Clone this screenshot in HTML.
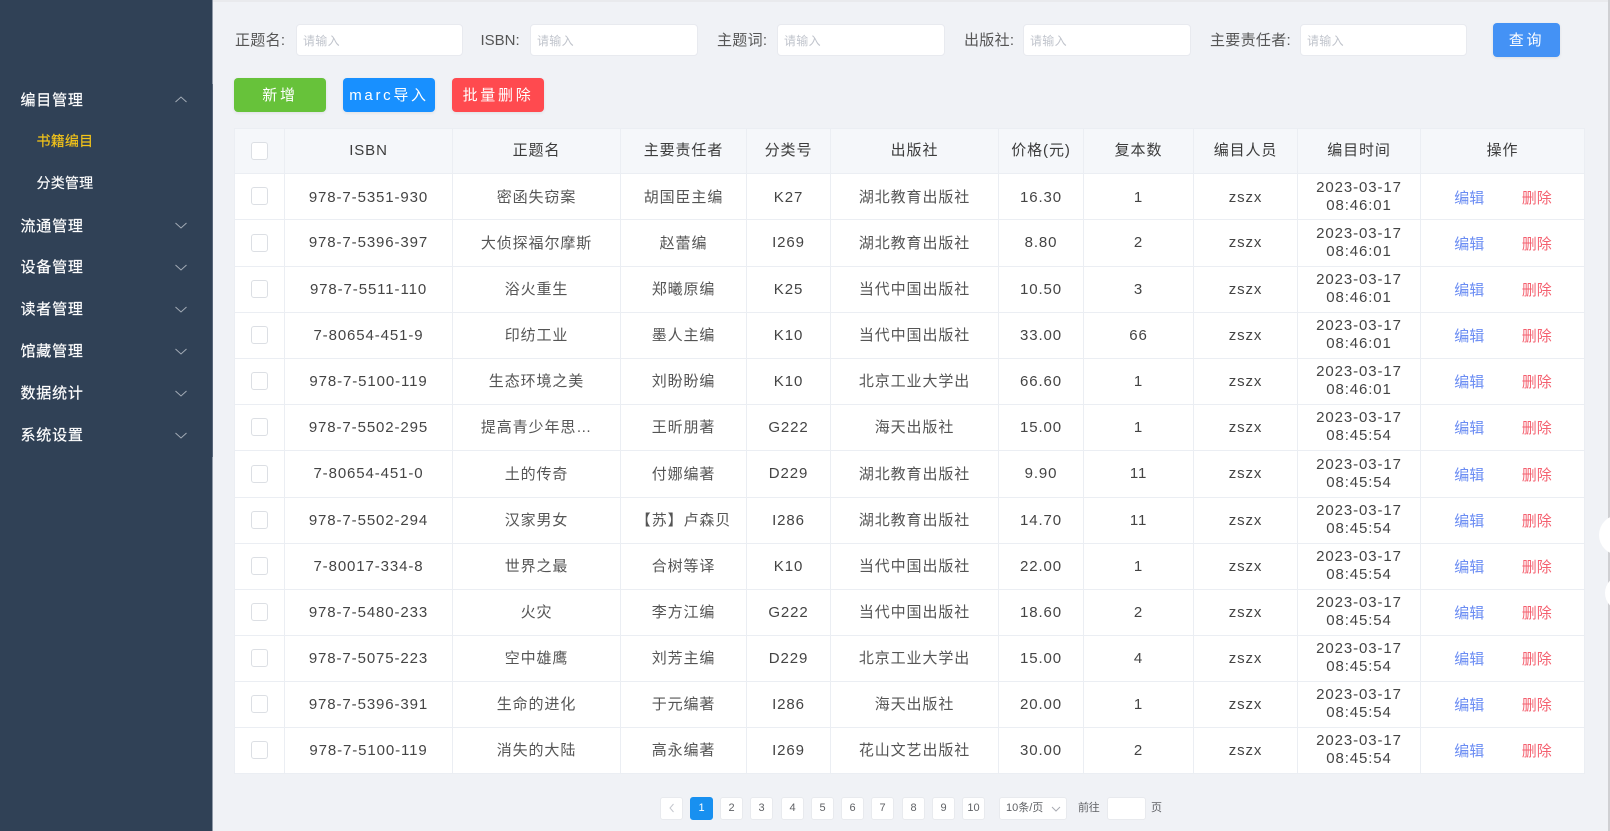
<!DOCTYPE html>
<html lang="zh-CN">
<head>
<meta charset="utf-8">
<title>书籍编目</title>
<style>
*{box-sizing:border-box;margin:0;padding:0}
html,body{width:1610px;height:831px;overflow:hidden}
body{position:relative;background:#f0f2f6;font-family:"Liberation Sans","Noto Sans CJK SC",sans-serif;font-size:15px;color:#555}
.abs{position:absolute;white-space:nowrap}
#side{position:absolute;left:0;top:0;width:212px;height:831px;background:#304156}
#edge{position:absolute;left:212px;top:0;width:1px;height:831px;background:#8f99a7}
#notch{position:absolute;left:212px;top:84px;width:1px;height:373px;background:#58667a}
#topline{position:absolute;left:212px;top:0;width:1398px;height:2px;background:#e9eaed}
#rightline{position:absolute;left:1608px;top:0;width:2px;height:831px;background:#cfd0d3}
.mi{position:absolute;left:20.500px;height:20px;line-height:20px;font-size:15px;letter-spacing:.8px;color:#fff;white-space:nowrap;-webkit-text-stroke:.2px #fff}
.si{position:absolute;left:36.500px;height:20px;line-height:20px;font-size:14px;letter-spacing:.2px;color:#fff;white-space:nowrap;-webkit-text-stroke:.15px currentColor}
.ar{position:absolute;left:175px;width:12px;height:7px}
.lb{position:absolute;top:31px;height:20px;line-height:20px;letter-spacing:.3px;color:#555;white-space:nowrap}
.ip{position:absolute;top:24px;height:32px;background:#fff;border:1px solid #e8eaef;border-radius:4px;font-size:12px;line-height:32px;padding-left:6px;color:#c0c4cc;letter-spacing:.3px}
.btn{position:absolute;top:78px;height:34px;line-height:36px;text-align:center;color:#fff;border-radius:4px;letter-spacing:2.700px;box-shadow:0 1px 3px rgba(0,0,0,.08);white-space:nowrap}
#tb{position:absolute;left:234px;top:128px;width:1350px;border-collapse:collapse;table-layout:fixed;background:#fff;letter-spacing:.9px;color:#555}
#tb th,#tb td{border:1px solid #ebeef3;text-align:center;padding:1px 0 0;vertical-align:middle;overflow:hidden;white-space:nowrap;line-height:18px}
#tb th{background:#f5f7fa;font-weight:normal;color:#3c3c3c;height:45px;padding:0 0 1px}
#tb td{height:46px}
#tb td.c{color:#444;padding:0}
#tb td.d{color:#444;line-height:17.600px;padding:0 0 1px}
#tb td.k{padding:0 0 1px}
.cb{display:inline-block;width:17px;height:18px;border:1.500px solid #dcdfe4;border-radius:3px;background:#fff;vertical-align:middle}
#tb td.a{letter-spacing:0;padding:3px 0 0 1px}
.e{color:#6a8cf3}
.x{color:#f4606f;margin-left:37.500px}
.pg{position:absolute;top:797px;width:23px;height:23px;background:#fff;border:1px solid #e8eaee;border-radius:3px;text-align:center;line-height:21px;font-size:11px;color:#606266}
.pg.on{background:#1890f0;border-color:#1890f0;color:#fff}
.circ{position:absolute;border-radius:50%;background:#fff}
</style>
</head>
<body>
<div id="topline"></div>
<div id="rightline"></div>
<div id="side"></div>
<div id="edge"></div>
<div id="notch"></div>

<div class="mi" style="top:91px">编目管理</div>
<svg class="ar" style="top:96px" viewBox="0 0 12 7"><path d="M.5 6 6 1l5.500 5" fill="none" stroke="#a3abb6" stroke-width="1"/></svg>
<div class="si" style="top:131px;color:#f5c518">书籍编目</div>
<div class="si" style="top:173px">分类管理</div>
<div class="mi" style="top:217px">流通管理</div>
<svg class="ar" style="top:222px" viewBox="0 0 12 7"><path d="M.5 1 6 6l5.500-5" fill="none" stroke="#a3abb6" stroke-width="1"/></svg>
<div class="mi" style="top:258px">设备管理</div>
<svg class="ar" style="top:264px" viewBox="0 0 12 7"><path d="M.5 1 6 6l5.500-5" fill="none" stroke="#a3abb6" stroke-width="1"/></svg>
<div class="mi" style="top:300px">读者管理</div>
<svg class="ar" style="top:306px" viewBox="0 0 12 7"><path d="M.5 1 6 6l5.500-5" fill="none" stroke="#a3abb6" stroke-width="1"/></svg>
<div class="mi" style="top:342px">馆藏管理</div>
<svg class="ar" style="top:348px" viewBox="0 0 12 7"><path d="M.5 1 6 6l5.500-5" fill="none" stroke="#a3abb6" stroke-width="1"/></svg>
<div class="mi" style="top:384px">数据统计</div>
<svg class="ar" style="top:390px" viewBox="0 0 12 7"><path d="M.5 1 6 6l5.500-5" fill="none" stroke="#a3abb6" stroke-width="1"/></svg>
<div class="mi" style="top:426px">系统设置</div>
<svg class="ar" style="top:432px" viewBox="0 0 12 7"><path d="M.5 1 6 6l5.500-5" fill="none" stroke="#a3abb6" stroke-width="1"/></svg>

<div class="lb" style="left:235px">正题名:</div>
<div class="ip" style="left:296px;width:167px">请输入</div>
<div class="lb" style="left:480.500px;letter-spacing:0">ISBN:</div>
<div class="ip" style="left:530px;width:168px">请输入</div>
<div class="lb" style="left:717px">主题词:</div>
<div class="ip" style="left:777px;width:168px">请输入</div>
<div class="lb" style="left:964px">出版社:</div>
<div class="ip" style="left:1023px;width:168px">请输入</div>
<div class="lb" style="left:1210px">主要责任者:</div>
<div class="ip" style="left:1300px;width:167px">请输入</div>
<div class="btn" style="left:1493px;top:23px;width:67px;background:#4492f5">查询</div>

<div class="btn" style="left:234px;width:92px;background:#67c23a">新增</div>
<div class="btn" style="left:343px;width:92px;background:#1890ff">marc导入</div>
<div class="btn" style="left:452px;width:92px;background:#ff4a4f">批量删除</div>

<table id="tb">
<colgroup><col style="width:50px"><col style="width:168px"><col style="width:168px"><col style="width:126px"><col style="width:84px"><col style="width:168px"><col style="width:85px"><col style="width:110px"><col style="width:104px"><col style="width:123px"><col style="width:164px"></colgroup>
<tr><th><span class="cb"></span></th><th>ISBN</th><th>正题名</th><th>主要责任者</th><th>分类号</th><th>出版社</th><th>价格(元)</th><th>复本数</th><th>编目人员</th><th>编目时间</th><th>操作</th></tr>
<tr><td class="k" style="height:45px"><span class="cb"></span></td><td class="c" style="padding-top:2px">978-7-5351-930</td><td style="padding-top:3px">密函失窃案</td><td style="padding-top:3px">胡国臣主编</td><td class="c" style="padding-top:2px">K27</td><td style="padding-top:3px">湖北教育出版社</td><td class="c" style="padding-top:2px">16.30</td><td class="c" style="padding-top:2px">1</td><td class="c" style="padding-top:2px">zszx</td><td class="d" style="padding-bottom:0">2023-03-17<br>08:46:01</td><td class="a" style="padding-top:5px"><span class="e">编辑</span><span class="x">删除</span></td></tr>
<tr><td class="k" style="height:47px"><span class="cb"></span></td><td class="c">978-7-5396-397</td><td>大侦探福尔摩斯</td><td>赵蕾编</td><td class="c">I269</td><td>湖北教育出版社</td><td class="c">8.80</td><td class="c">2</td><td class="c">zszx</td><td class="d">2023-03-17<br>08:46:01</td><td class="a"><span class="e">编辑</span><span class="x">删除</span></td></tr>
<tr><td class="k"><span class="cb"></span></td><td class="c">978-7-5511-110</td><td>浴火重生</td><td>郑曦原编</td><td class="c">K25</td><td>当代中国出版社</td><td class="c">10.50</td><td class="c">3</td><td class="c">zszx</td><td class="d">2023-03-17<br>08:46:01</td><td class="a"><span class="e">编辑</span><span class="x">删除</span></td></tr>
<tr><td class="k"><span class="cb"></span></td><td class="c">7-80654-451-9</td><td>印纺工业</td><td>墨人主编</td><td class="c">K10</td><td>当代中国出版社</td><td class="c">33.00</td><td class="c">66</td><td class="c">zszx</td><td class="d">2023-03-17<br>08:46:01</td><td class="a"><span class="e">编辑</span><span class="x">删除</span></td></tr>
<tr><td class="k"><span class="cb"></span></td><td class="c">978-7-5100-119</td><td>生态环境之美</td><td>刘盼盼编</td><td class="c">K10</td><td>北京工业大学出</td><td class="c">66.60</td><td class="c">1</td><td class="c">zszx</td><td class="d">2023-03-17<br>08:46:01</td><td class="a"><span class="e">编辑</span><span class="x">删除</span></td></tr>
<tr><td class="k"><span class="cb"></span></td><td class="c">978-7-5502-295</td><td>提高青少年思…</td><td>王昕朋著</td><td class="c">G222</td><td>海天出版社</td><td class="c">15.00</td><td class="c">1</td><td class="c">zszx</td><td class="d">2023-03-17<br>08:45:54</td><td class="a"><span class="e">编辑</span><span class="x">删除</span></td></tr>
<tr><td class="k" style="height:47px"><span class="cb"></span></td><td class="c">7-80654-451-0</td><td>土的传奇</td><td>付娜编著</td><td class="c">D229</td><td>湖北教育出版社</td><td class="c">9.90</td><td class="c">11</td><td class="c">zszx</td><td class="d">2023-03-17<br>08:45:54</td><td class="a"><span class="e">编辑</span><span class="x">删除</span></td></tr>
<tr><td class="k"><span class="cb"></span></td><td class="c">978-7-5502-294</td><td>汉家男女</td><td>【苏】卢森贝</td><td class="c">I286</td><td>湖北教育出版社</td><td class="c">14.70</td><td class="c">11</td><td class="c">zszx</td><td class="d">2023-03-17<br>08:45:54</td><td class="a"><span class="e">编辑</span><span class="x">删除</span></td></tr>
<tr><td class="k"><span class="cb"></span></td><td class="c">7-80017-334-8</td><td>世界之最</td><td>合树等译</td><td class="c">K10</td><td>当代中国出版社</td><td class="c">22.00</td><td class="c">1</td><td class="c">zszx</td><td class="d">2023-03-17<br>08:45:54</td><td class="a"><span class="e">编辑</span><span class="x">删除</span></td></tr>
<tr><td class="k"><span class="cb"></span></td><td class="c">978-7-5480-233</td><td>火灾</td><td>李方江编</td><td class="c">G222</td><td>当代中国出版社</td><td class="c">18.60</td><td class="c">2</td><td class="c">zszx</td><td class="d">2023-03-17<br>08:45:54</td><td class="a"><span class="e">编辑</span><span class="x">删除</span></td></tr>
<tr><td class="k"><span class="cb"></span></td><td class="c">978-7-5075-223</td><td>空中雄鹰</td><td>刘芳主编</td><td class="c">D229</td><td>北京工业大学出</td><td class="c">15.00</td><td class="c">4</td><td class="c">zszx</td><td class="d">2023-03-17<br>08:45:54</td><td class="a"><span class="e">编辑</span><span class="x">删除</span></td></tr>
<tr><td class="k"><span class="cb"></span></td><td class="c">978-7-5396-391</td><td>生命的进化</td><td>于元编著</td><td class="c">I286</td><td>海天出版社</td><td class="c">20.00</td><td class="c">1</td><td class="c">zszx</td><td class="d">2023-03-17<br>08:45:54</td><td class="a"><span class="e">编辑</span><span class="x">删除</span></td></tr>
<tr><td class="k" style="height:45px"><span class="cb"></span></td><td class="c">978-7-5100-119</td><td>消失的大陆</td><td>高永编著</td><td class="c">I269</td><td>花山文艺出版社</td><td class="c">30.00</td><td class="c">2</td><td class="c">zszx</td><td class="d">2023-03-17<br>08:45:54</td><td class="a"><span class="e">编辑</span><span class="x">删除</span></td></tr>
</table>

<div class="circ" style="left:1599px;top:515px;width:40px;height:40px"></div>
<div class="circ" style="left:1605px;top:575px;width:36px;height:36px"></div>

<div class="pg" style="left:660px"><svg width="8" height="10" viewBox="0 0 8 10" style="margin-top:5px"><path d="M5.500 1 2 5l3.500 4" fill="none" stroke="#c4c7cd" stroke-width="1"/></svg></div>
<div class="pg on" style="left:690px">1</div>
<div class="pg" style="left:720px">2</div>
<div class="pg" style="left:750px">3</div>
<div class="pg" style="left:781px">4</div>
<div class="pg" style="left:811px">5</div>
<div class="pg" style="left:841px">6</div>
<div class="pg" style="left:871px">7</div>
<div class="pg" style="left:902px">8</div>
<div class="pg" style="left:932px">9</div>
<div class="pg" style="left:962px">10</div>
<div class="pg" style="left:999px;width:68px;text-align:left;padding-left:6px;font-size:11px">10条/页<svg width="10" height="6" viewBox="0 0 10 6" style="position:absolute;left:51px;top:8px"><path d="M1 1l4 4 4-4" fill="none" stroke="#a8abb2" stroke-width="1"/></svg></div>
<div class="abs" style="left:1078px;top:798px;line-height:20px;font-size:11px;letter-spacing:-.2px;color:#606266">前往</div>
<div class="pg" style="left:1107px;width:39px"></div>
<div class="abs" style="left:1151px;top:798px;line-height:20px;font-size:11px;color:#606266">页</div>
</body>
</html>
